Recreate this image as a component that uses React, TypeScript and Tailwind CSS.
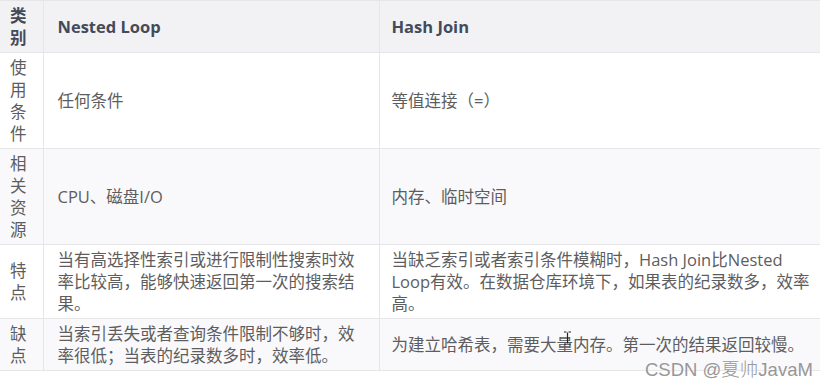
import React from 'react';

type Row = {
  label: string;
  nested: string;
  hash: string;
};

const rows: Row[] = [
  { label: '使用条件', nested: '任何条件', hash: '等值连接（=）' },
  { label: '相关资源', nested: 'CPU、磁盘I/O', hash: '内存、临时空间' },
  {
    label: '特点',
    nested: '当有高选择性索引或进行限制性搜索时效率比较高，能够快速返回第一次的搜索结果。',
    hash: '当缺乏索引或者索引条件模糊时，Hash Join比Nested Loop有效。在数据仓库环境下，如果表的纪录数多，效率高。',
  },
  {
    label: '缺点',
    nested: '当索引丢失或者查询条件限制不够时，效率很低；当表的纪录数多时，效率低。',
    hash: '为建立哈希表，需要大量内存。第一次的结果返回较慢。',
  },
];

const App: React.FC = () => {
  return (
    <div className="relative w-[825px] h-[389px] bg-white overflow-hidden font-['Open_Sans','Noto_Sans_CJK_SC',sans-serif] text-[16.5px] leading-[22px]">
      <table className="table-fixed border-collapse w-[820px]">
        <colgroup>
          <col className="w-[43px]" />
          <col className="w-[336px]" />
          <col className="w-[441px]" />
        </colgroup>
        <thead>
          <tr className="bg-[#f2f2f4] text-[#434b5b] font-bold">
            <th className="border-y border-r border-[#e6e6e9] px-[10px] py-[3.5px] text-left align-middle">类别</th>
            <th className="border border-[#e6e6e9] pl-[14px] pr-[12px] py-[3.5px] text-left align-middle">Nested Loop</th>
            <th className="border-y border-l border-[#e6e6e9] pl-[12px] pr-[4px] py-[3.5px] text-left align-middle">Hash Join</th>
          </tr>
        </thead>
        <tbody className="text-[#5d5d60]">
          {rows.map((row, i) => (
            <tr key={row.label} className={i % 2 === 1 ? 'bg-[#f9f9fb]' : 'bg-white'}>
              <td className="border-y border-r border-[#e6e6e9] px-[10px] py-[3.5px] align-middle">{row.label}</td>
              <td className="border border-[#e6e6e9] pl-[14px] pr-[12px] py-[3.5px] align-middle">{row.nested}</td>
              <td className="border-y border-l border-[#e6e6e9] pl-[12px] pr-[4px] py-[3.5px] align-middle">{row.hash}</td>
            </tr>
          ))}
        </tbody>
      </table>

      {/* text cursor hovering over the last row */}
      <svg className="absolute left-[563px] top-[331px]" width="9" height="14" viewBox="0 0 9 14">
        <path d="M1 1h2.5M5.5 1H8M4.5 1.5v11M1 13h2.5M5.5 13H8" stroke="#222" strokeWidth="1.2" fill="none" />
      </svg>

      {/* site watermark */}
      <div className="absolute left-[645px] top-[358px] font-['Liberation_Sans','Noto_Sans_CJK_SC',sans-serif] font-light text-[18.5px] leading-[24px] text-[#979797] [text-shadow:0_0_2px_#ffffff]">
        CSDN @夏帅JavaM
      </div>
    </div>
  );
};

export default App;
